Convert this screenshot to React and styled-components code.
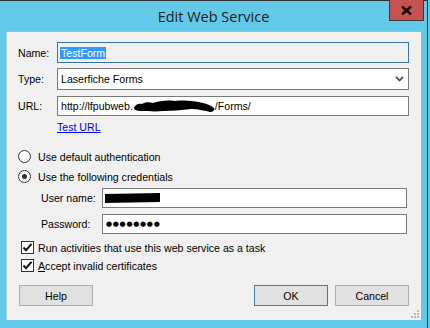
import React from 'react';
import styled, { createGlobalStyle } from 'styled-components';

const GlobalStyle = createGlobalStyle`
  html, body {
    margin: 0;
    padding: 0;
    background: #63c9e9;
  }
  body {
    font-family: "Liberation Sans", Arial, sans-serif;
    font-size: 10.6px;
    color: #000;
  }
`;

const Window = styled.div`
  width: 428px;
  height: 328px;
  box-sizing: border-box;
  background: #63c9e9;
  border-top: 1px solid #2f2f2f;
  border-right: 1px solid #2f2f2f;
  display: flex;
  flex-direction: column;
`;

const TitleBar = styled.div`
  height: 30px;
  display: grid;
  grid-template-columns: 1fr auto 1fr;
  align-items: start;
`;

const Title = styled.div`
  grid-column: 2;
  align-self: center;
  font-family: "Open Sans", "Noto Sans", sans-serif;
  font-size: 14.5px;
  color: #1c1c1c;
`;

const CloseButton = styled.div`
  grid-column: 3;
  justify-self: end;
  margin-right: 3px;
  margin-top: -1px;
  width: 35px;
  height: 21px;
  box-sizing: border-box;
  background: #c75050;
  border: 1px solid #3c3c3c;
  border-top: none;
  display: flex;
  align-items: center;
  justify-content: center;
  padding-top: 1px;
`;

const Panel = styled.div`
  position: relative;
  flex: 1;
  margin: 0 6px 8px 6px;
  background: #f0f0f0;
  border-top: 1px solid #9fbccb;
  border-left: 1px solid #b5cfdb;
  padding: 10px 12px 0 11px;
  display: flex;
  flex-direction: column;
`;

const Row = styled.div`
  display: flex;
  align-items: center;
  margin-top: ${p => p.$mt || 0}px;
  padding-left: ${p => p.$indent || 0}px;
`;

const Label = styled.div`
  width: ${p => p.$w}px;
  flex: none;
  line-height: 12px;
`;

const Field = styled.div`
  box-sizing: border-box;
  width: ${p => p.$w}px;
  height: ${p => p.$h}px;
  background: ${p => (p.$readOnly ? '#f0f0f0' : '#fff')};
  border: 1px solid ${p => (p.$focus ? '#3a75a8' : '#7a7a7a')};
  display: flex;
  align-items: center;
  padding: 0 2px 0 ${p => p.$pl || 2}px;
  white-space: nowrap;
  overflow: hidden;
`;

const Selected = styled.span`
  background: #3399ff;
  color: #fff;
  line-height: 12px;
  padding: 0 1px;
`;

const Chevron = styled.svg`
  margin-left: auto;
  margin-right: 2px;
`;

const Link = styled.a`
  color: #0000ee;
  text-decoration: underline;
  margin-left: 39px;
  line-height: 12px;
  cursor: pointer;
`;

const Choice = styled.label`
  display: flex;
  align-items: center;
  gap: ${p => p.$gap}px;
  line-height: 12px;
`;

const Radio = styled.span`
  box-sizing: border-box;
  width: 13px;
  height: 13px;
  border-radius: 50%;
  border: 1px solid #333;
  background: #fff;
  display: flex;
  align-items: center;
  justify-content: center;
  &::after {
    content: '';
    width: 5px;
    height: 5px;
    border-radius: 50%;
    background: ${p => (p.$checked ? '#333' : 'transparent')};
  }
`;

const Box = styled.span`
  box-sizing: border-box;
  width: 13px;
  height: 13px;
  border: 1px solid #333;
  background: #fff;
  display: flex;
  align-items: center;
  justify-content: center;
`;

const Mnemonic = styled.span`
  text-decoration: underline;
`;

const Dots = styled.span`
  font-family: "DejaVu Sans", sans-serif;
  font-size: 7px;
  letter-spacing: 0.7px;
  margin-left: 1px;
`;

const Buttons = styled.div`
  display: flex;
  gap: 7px;
  margin-top: 13px;
  padding-left: 1px;
`;

const Button = styled.button`
  box-sizing: border-box;
  width: 74px;
  height: 21px;
  background: #e1e1e1;
  border: 1px solid ${p => (p.$default ? '#3c7fb1' : '#adadad')};
  font-family: "Liberation Sans", Arial, sans-serif;
  font-size: 10.6px;
  color: #000;
  padding: 0;
`;

const Spacer = styled.div`
  flex: 1;
`;

const Grip = styled.svg`
  position: absolute;
  right: 2px;
  bottom: 2px;
`;

function Check() {
  return (
    <svg width="11" height="11" viewBox="0 0 11 11">
      <path d="M1.5 5.5 L4 8.2 L9.5 1.8" fill="none" stroke="#111" strokeWidth="2" />
    </svg>
  );
}

function Scribble({ w, h, d }) {
  return (
    <svg width={w} height={h} viewBox={`0 0 ${w} ${h}`} style={{ flex: 'none' }}>
      <path d={d} fill="#000" />
    </svg>
  );
}

export default function App() {
  return (
    <>
      <GlobalStyle />
      <Window>
        <TitleBar>
          <Title>Edit Web Service</Title>
          <CloseButton>
            <svg width="11" height="9" viewBox="0 0 11 9">
              <path d="M1 0.5 L10 8.5 M10 0.5 L1 8.5" stroke="#000" strokeWidth="2.4" />
            </svg>
          </CloseButton>
        </TitleBar>
        <Panel>
          <Row>
            <Label $w={39}>Name:</Label>
            <Field $w={352} $h={21} $focus $readOnly>
              <Selected>TestForm</Selected>
            </Field>
          </Row>
          <Row $mt={5}>
            <Label $w={39}>Type:</Label>
            <Field $w={352} $h={22} $pl={3}>
              Laserfiche Forms
              <Chevron width="9" height="6" viewBox="0 0 9 6">
                <path d="M1 1 L4.5 4.5 L8 1" fill="none" stroke="#555" strokeWidth="1.8" />
              </Chevron>
            </Field>
          </Row>
          <Row $mt={6}>
            <Label $w={39}>URL:</Label>
            <Field $w={352} $h={20} $pl={3}>
              http://lfpubweb.
              <Scribble
                w={82}
                h={14}
                d="M1 9 C2 6 5 4 9 5 C12 3 16 3 20 4 C26 2 34 1 42 2 C52 1 62 2 70 4 C75 5 79 7 81 9 C82 11 80 13 77 13 C72 12 66 10 58 10 C48 11 40 12 30 12 C22 13 14 12 8 12 C4 12 1 11 1 9 Z"
              />
              /Forms/
            </Field>
          </Row>
          <Row $mt={5}>
            <Link>Test URL</Link>
          </Row>
          <Row $mt={17}>
            <Choice $gap={7}>
              <Radio />
              Use default authentication
            </Choice>
          </Row>
          <Row $mt={7}>
            <Choice $gap={7}>
              <Radio $checked />
              Use the following credentials
            </Choice>
          </Row>
          <Row $mt={5} $indent={23}>
            <Label $w={61}>User name:</Label>
            <Field $w={305} $h={20}>
              <Scribble
                w={55}
                h={10}
                d="M0 1 L55 0 L55 9 L0 10 Z"
              />
            </Field>
          </Row>
          <Row $mt={6} $indent={23}>
            <Label $w={61}>Password:</Label>
            <Field $w={305} $h={20}>
              <Dots>●●●●●●●●</Dots>
            </Field>
          </Row>
          <Row $mt={7} $indent={3}>
            <Choice $gap={4}>
              <Box><Check /></Box>
              Run activities that use this web service as a task
            </Choice>
          </Row>
          <Row $mt={5} $indent={3}>
            <Choice $gap={4}>
              <Box><Check /></Box>
              <span><Mnemonic>A</Mnemonic>ccept invalid certificates</span>
            </Choice>
          </Row>
          <Buttons>
            <Button>Help</Button>
            <Spacer />
            <Button $default>OK</Button>
            <Button>Cancel</Button>
          </Buttons>
          <Grip width="9" height="9" viewBox="0 0 9 9">
            <g fill="#b8b8b8">
              <rect x="7" y="1" width="2" height="2" />
              <rect x="4" y="4" width="2" height="2" />
              <rect x="7" y="4" width="2" height="2" />
              <rect x="1" y="7" width="2" height="2" />
              <rect x="4" y="7" width="2" height="2" />
              <rect x="7" y="7" width="2" height="2" />
            </g>
          </Grip>
        </Panel>
      </Window>
    </>
  );
}
